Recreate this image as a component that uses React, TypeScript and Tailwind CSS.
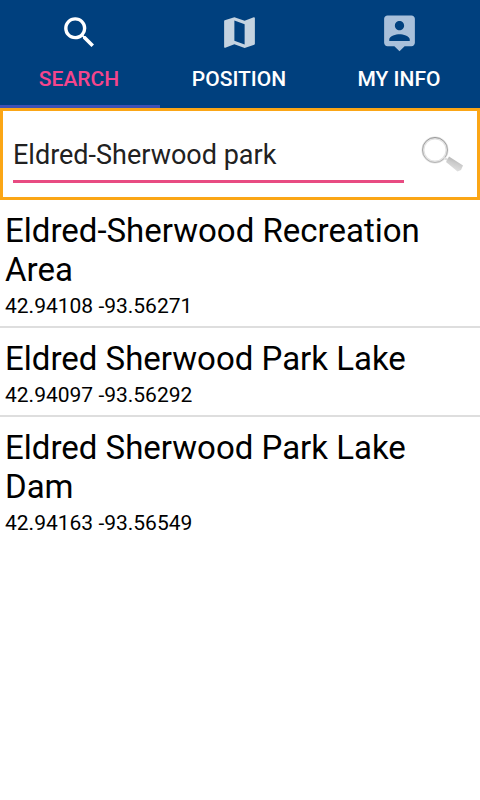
import { useState } from 'react';
import { MdMap, MdSearch } from 'react-icons/md';

function PersonPin({ size, className }: { size: number; className: string }) {
    return (
        <svg width={size} height={size} viewBox="0 0 24 24" fill="currentColor" className={className} aria-hidden="true">
            <path d="M19 2H5c-1.11 0-2 .9-2 2v14c0 1.1.89 2 2 2h4l3 3 3-3h4c1.1 0 2-.9 2-2V4c0-1.1-.9-2-2-2zm-7 3.3c1.49 0 2.7 1.21 2.7 2.7s-1.21 2.7-2.7 2.7S9.3 9.49 9.3 8s1.21-2.7 2.7-2.7zM18 17H6v-.9c0-2 4-3.1 6-3.1s6 1.1 6 3.1v.9z" />
        </svg>
    );
}

const tabs = [
    { id: 'search', label: 'SEARCH', icon: MdSearch, color: 'text-white' },
    { id: 'position', label: 'POSITION', icon: MdMap, color: 'text-[#c5d3e0]' },
    { id: 'info', label: 'MY INFO', icon: PersonPin, color: 'text-[#a9c0da]' },
];

const places = [
    { name: 'Eldred-Sherwood Recreation Area', lat: '42.94108', lng: '-93.56271' },
    { name: 'Eldred Sherwood Park Lake', lat: '42.94097', lng: '-93.56292' },
    { name: 'Eldred Sherwood Park Lake Dam', lat: '42.94163', lng: '-93.56549' },
];

function Magnifier() {
    return (
        <svg width="48" height="48" viewBox="0 0 48 48" fill="none" aria-hidden="true">
            <defs>
                <linearGradient id="rim" x1="0" y1="0" x2="0" y2="1">
                    <stop offset="0" stopColor="#979797" />
                    <stop offset="1" stopColor="#b4b4b4" />
                </linearGradient>
                <linearGradient id="handle" x1="0.7" y1="0" x2="0.3" y2="1">
                    <stop offset="0" stopColor="#a8a8a8" />
                    <stop offset="0.45" stopColor="#cccccc" />
                    <stop offset="1" stopColor="#e6e6e6" />
                </linearGradient>
            </defs>
            <circle cx="17" cy="20" r="12" stroke="#e2e2e2" strokeWidth="3" />
            <circle cx="17" cy="20" r="12.5" stroke="url(#rim)" strokeWidth="1" />
            <path d="M26 28l4 2" stroke="#dedede" strokeWidth="2" />
            <path d="M31 26.500l14 9-2 4.500-3.500 1.500-11.500-9.500z" fill="url(#handle)" />
        </svg>
    );
}

export default function App() {
    const [active, setActive] = useState('search');
    const [query, setQuery] = useState('Eldred-Sherwood park');

    return (
        <div className="min-h-screen bg-white font-['Roboto',sans-serif] text-black">
            <nav className="grid grid-cols-3 bg-[#00407e]">
                {tabs.map(({ id, label, icon: Icon, color }) => (
                    <button
                        key={id}
                        type="button"
                        onClick={() => setActive(id)}
                        className={`flex flex-col items-center border-b-3 pt-3 pr-0.5 pb-3.5 text-[21px]/[24px] font-medium ${active === id ? 'border-[#3f51b5] text-[#f5458c]' : 'border-transparent text-white'}`}
                    >
                        <Icon size={41} className={color} />
                        <span className="mt-3.5">{label}</span>
                    </button>
                ))}
            </nav>

            <form className="flex items-center border-3 border-[#fba616] py-3.5 pr-[11px] pl-2.5" onSubmit={(e) => e.preventDefault()}>
                <input
                    type="text"
                    aria-label="Search place"
                    value={query}
                    onChange={(e) => setQuery(e.target.value)}
                    className="h-[58px] min-w-0 flex-1 border-b-3 border-[#e84b82] pt-1 text-[27px] text-[#212121] outline-none"
                />
                <button type="submit" aria-label="Search" className="ml-3.5">
                    <Magnifier />
                </button>
            </form>

            <ul className="divide-y-2 divide-[#dedede]">
                {places.map((place) => (
                    <li key={place.name} className="px-[5px] pt-[11px] pb-[7px]">
                        <h2 className="text-[33px]/[39px]">{place.name}</h2>
                        <p className="mt-[5px] text-[21px]/[25px]">{place.lat} {place.lng}</p>
                    </li>
                ))}
            </ul>
        </div>
    );
}
